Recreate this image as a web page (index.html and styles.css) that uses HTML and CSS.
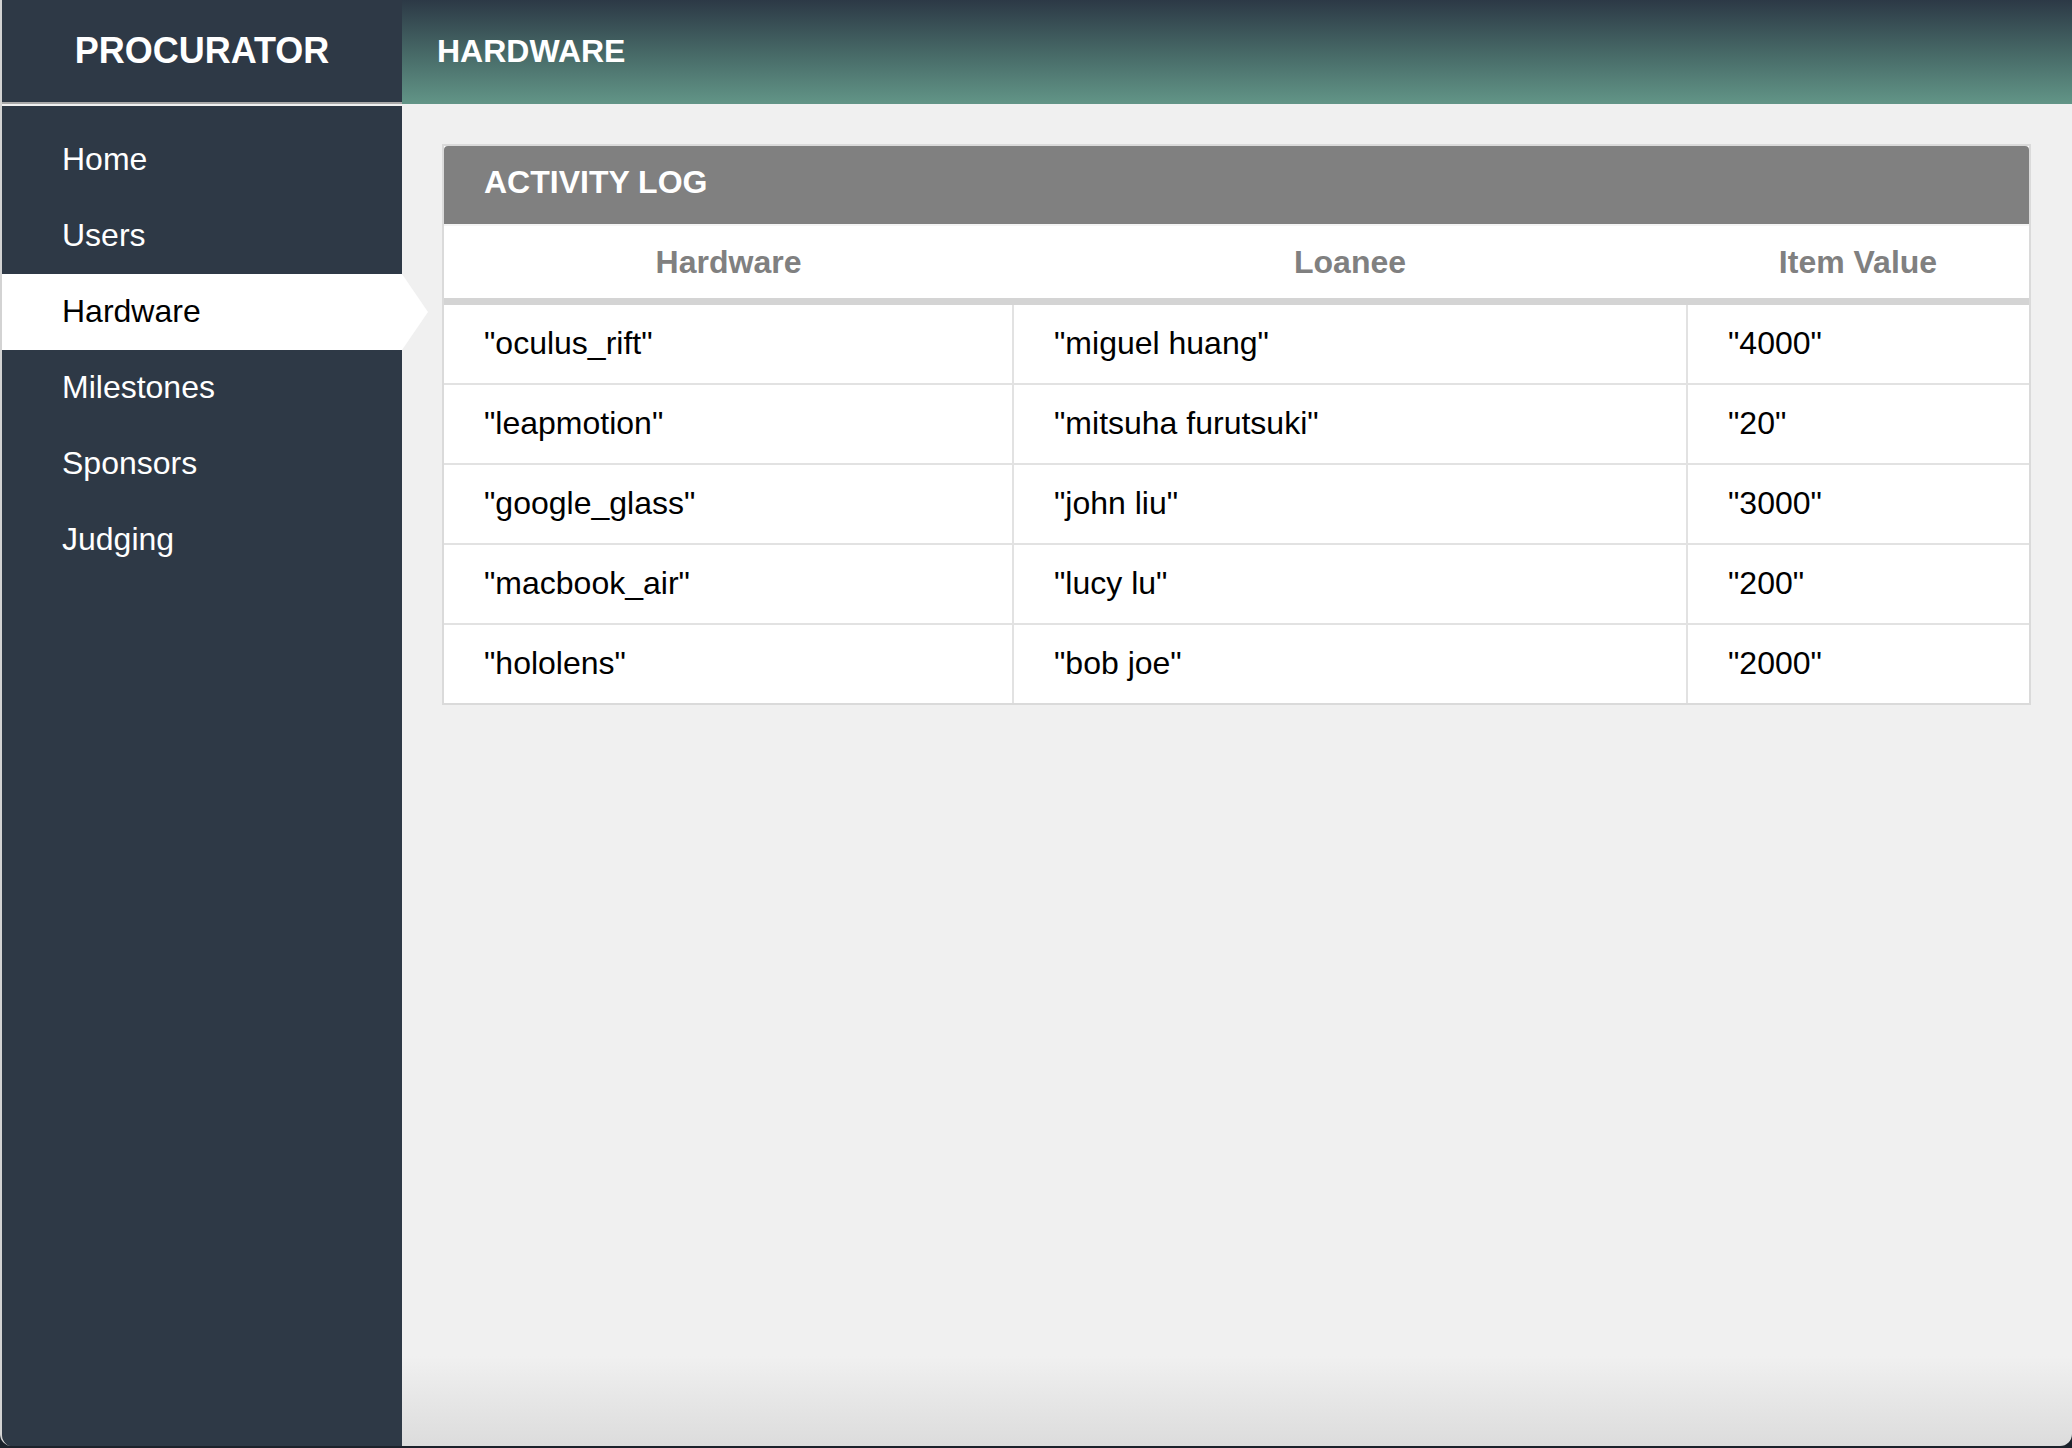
FILE: index.html
```html
<!DOCTYPE html>
<html lang="en">
<head>
<meta charset="utf-8">
<title>Procurator - Hardware</title>
<link rel="stylesheet" href="styles.css">
</head>
<body>
<div class="app">
  <aside class="sidebar">
    <div class="brand">PROCURATOR</div>
    <nav class="nav">
      <a class="nav-item" href="#">Home</a>
      <a class="nav-item" href="#">Users</a>
      <a class="nav-item active" href="#">Hardware</a>
      <a class="nav-item" href="#">Milestones</a>
      <a class="nav-item" href="#">Sponsors</a>
      <a class="nav-item" href="#">Judging</a>
    </nav>
  </aside>
  <main class="main">
    <header class="topbar">HARDWARE</header>
    <section class="content">
      <div class="card">
        <div class="card-head">ACTIVITY LOG</div>
        <table class="log">
          <colgroup>
            <col class="c1">
            <col class="c2">
            <col class="c3">
          </colgroup>
          <thead>
            <tr><th>Hardware</th><th>Loanee</th><th>Item Value</th></tr>
          </thead>
          <tbody>
            <tr><td>"oculus_rift"</td><td>"miguel huang"</td><td>"4000"</td></tr>
            <tr><td>"leapmotion"</td><td>"mitsuha furutsuki"</td><td>"20"</td></tr>
            <tr><td>"google_glass"</td><td>"john liu"</td><td>"3000"</td></tr>
            <tr><td>"macbook_air"</td><td>"lucy lu"</td><td>"200"</td></tr>
            <tr><td>"hololens"</td><td>"bob joe"</td><td>"2000"</td></tr>
          </tbody>
        </table>
      </div>
    </section>
  </main>
</div>
</body>
</html>
```

FILE: styles.css
```css
html, body {
  margin: 0;
  padding: 0;
}

body {
  width: 2072px;
  height: 1448px;
  overflow: hidden;
  background: #1c222b;
  font-family: "Liberation Sans", Arial, Helvetica, sans-serif;
}

.app {
  display: flex;
  width: 2072px;
  height: 1446px;
  border-left: 2px solid #d3d3d3;
  box-sizing: border-box;
  border-radius: 0 0 12px 12px;
  overflow: hidden;
}

.sidebar {
  width: 400px;
  flex: none;
  background: #2e3946;
  display: flex;
  flex-direction: column;
  position: relative;
  z-index: 2;
}

.brand {
  height: 102px;
  line-height: 102px;
  text-align: center;
  color: #fff;
  font-weight: bold;
  font-size: 36px;
  border-bottom: 2px solid #a9a9a9;
}

.nav {
  border-top: 2px solid #f2f2f2;
  padding-top: 16px;
  display: flex;
  flex-direction: column;
}

.nav-item {
  display: block;
  height: 76px;
  line-height: 74px;
  padding-left: 60px;
  font-size: 32px;
  color: #fff;
  text-decoration: none;
  position: relative;
}

.nav-item.active {
  background: #fff;
  color: #000;
}

.nav-item.active::after {
  content: "";
  position: absolute;
  top: 0;
  left: 100%;
  width: 0;
  height: 0;
  border-top: 38px solid transparent;
  border-bottom: 38px solid transparent;
  border-left: 26px solid #fff;
}

.main {
  flex: 1;
  display: flex;
  flex-direction: column;
  background: linear-gradient(to bottom, #f0f0f0 0, #f0f0f0 calc(100% - 90px), #dcdcdc 100%);
}

.topbar {
  height: 104px;
  line-height: 102px;
  padding-left: 35px;
  color: #fff;
  font-weight: bold;
  font-size: 32px;
  background: linear-gradient(to bottom, #2c3946 0%, #466866 50%, #629587 100%);
}

.content {
  padding: 40px 41px 40px 40px;
}

.card {
  border: 2px solid #dadada;
  background: #fff;
}

.card-head {
  height: 78px;
  line-height: 72px;
  padding-left: 40px;
  background: #808080;
  color: #fff;
  font-weight: bold;
  font-size: 32px;
  border-radius: 4px 4px 0 0;
}

.log {
  width: 100%;
  border-collapse: collapse;
  table-layout: fixed;
  font-size: 32px;
}

.log .c1 { width: 569px; }
.log .c2 { width: 674px; }

.log th {
  height: 72px;
  padding: 0;
  color: #808080;
  font-weight: bold;
  text-align: center;
  border-top: 2px solid #f4f4f4;
  border-bottom: 7px solid #d4d4d4;
}

.log td {
  height: 76px;
  padding: 0 0 2px 40px;
  color: #000;
  border-bottom: 2px solid #e2e2e2;
  border-left: 2px solid #e2e2e2;
  white-space: nowrap;
}

.log td:first-child {
  border-left: 0;
}

.log tbody tr:last-child td {
  border-bottom: 0;
}
```
